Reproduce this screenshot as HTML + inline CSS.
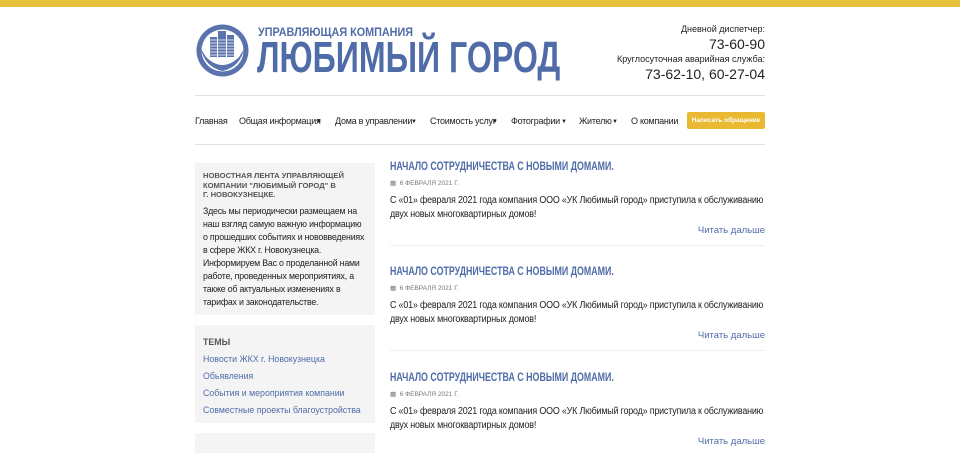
<!DOCTYPE html>
<html><head><meta charset="utf-8"><style>
*{margin:0;padding:0;box-sizing:border-box}
body{width:960px;height:448px;overflow:hidden;background:#fff;font-family:"Liberation Sans",sans-serif;color:#222;position:relative}
.top{position:absolute;left:0;top:0;width:960px;height:7px;background:#e9c23c}
.a{position:absolute;white-space:nowrap}
.blue{color:#4f6ca8}
.nav{font-size:9px;color:#222;top:116px;letter-spacing:-0.25px}
.nav b{font-weight:normal;font-size:6px;vertical-align:1px}
.box{position:absolute;left:195px;width:180px;background:#f4f4f4;white-space:nowrap}
.post .t{font-size:11.5px;font-weight:bold;color:#4f6ca8;transform:scaleX(.77);transform-origin:left top;white-space:nowrap}
.post .d{font-size:6.5px;color:#777}
.post .x{font-size:9.8px;line-height:14px;color:#222;letter-spacing:-0.2px;transform:scaleX(.91);transform-origin:left top;white-space:nowrap}
.post .r{font-size:9.5px;color:#4f6ca8}
</style></head><body>
<div class="top"></div>
<svg class="a" style="left:195px;top:23px" width="55" height="55" viewBox="0 0 55 55">
<circle cx="27.5" cy="27.5" r="26" fill="#5a73ad"/>
<circle cx="27.5" cy="27.5" r="21" fill="#fff"/>
<path d="M6 26 Q10 44 27.5 48 Q45 44 49 26 L44 34 Q36 42 27.5 42 Q19 42 11 34Z" fill="#5a73ad"/>
<g fill="#5a73ad"><rect x="15" y="14" width="7" height="20"/><rect x="23" y="8" width="8" height="26"/><rect x="32" y="12" width="7" height="22"/></g>
<g stroke="#fff" stroke-width="0.8"><path d="M15 17H39M15 20H39M15 23H39M15 26H39M15 29H39M15 32H39"/></g>
</svg>
<div class="a blue" style="left:258px;top:25px;font-size:12px;font-weight:bold;transform:scaleX(.9);transform-origin:left top">УПРАВЛЯЮЩАЯ КОМПАНИЯ</div>
<div class="a blue" style="left:257px;top:33px;font-size:44px;font-weight:bold;transform:scaleX(.73);transform-origin:left top">ЛЮБИМЫЙ ГОРОД</div>
<div class="a" style="right:195px;top:23px;font-size:9px;text-align:right;line-height:13px">Дневной диспетчер:<br><span style="font-size:14px;line-height:16px">73-60-90</span><br>Круглосуточная аварийная служба:<br><span style="font-size:14px;line-height:16px">73-62-10, 60-27-04</span></div>
<div class="a" style="left:195px;top:95px;width:570px;height:1px;background:#e2e2e2"></div>
<div class="a nav" style="left:195px">Главная</div>
<div class="a nav" style="left:239px">Общая информация</div><div class="a nav" style="left:316px"><b>▼</b></div>
<div class="a nav" style="left:335px">Дома в управлении</div><div class="a nav" style="left:411px"><b>▼</b></div>
<div class="a nav" style="left:430px">Стоимость услуг</div><div class="a nav" style="left:492px"><b>▼</b></div>
<div class="a nav" style="left:511px">Фотографии</div><div class="a nav" style="left:561px"><b>▼</b></div>
<div class="a nav" style="left:579px">Жителю</div><div class="a nav" style="left:612px"><b>▼</b></div>
<div class="a nav" style="left:631px">О компании</div>
<div class="a" style="left:687px;top:112px;width:78px;height:17px;background:#e9b931;border-radius:2px;color:#fff;font-size:6.5px;font-weight:bold;text-align:center;line-height:17px">Написать обращение</div>
<div class="a" style="left:195px;top:144px;width:570px;height:1px;background:#e2e2e2"></div>
<div class="box" style="top:163px;height:152px;padding:8px 8px">
<div style="font-size:7.6px;font-weight:bold;color:#555;line-height:9.5px">НОВОСТНАЯ ЛЕНТА УПРАВЛЯЮЩЕЙ<br>КОМПАНИИ "ЛЮБИМЫЙ ГОРОД" В<br>Г. НОВОКУЗНЕЦКЕ.</div>
<div style="font-size:8.8px;line-height:13px;margin-top:5px;color:#222;letter-spacing:-0.2px">Здесь мы периодически размещаем на<br>наш взгляд самую важную информацию<br>о прошедших событиях и нововведениях<br>в сфере ЖКХ г. Новокузнецка.<br>Информируем Вас о проделанной нами<br>работе, проведенных мероприятиях, а<br>также об актуальных изменениях в<br>тарифах и законодательстве.</div>
</div>
<div class="box" style="top:325px;height:98px;padding:9px 8px;font-size:8.8px;line-height:17px">
<div style="font-weight:bold;color:#555">ТЕМЫ</div>
<div class="blue">Новости ЖКХ г. Новокузнецка</div>
<div class="blue">Обьявления</div>
<div class="blue">События и мероприятия компании</div>
<div class="blue">Совместные проекты благоустройства</div>
</div>
<div class="box" style="top:433px;height:20px"></div>

<div class="a post" style="left:390px;top:161px;width:375px">
<div class="t">НАЧАЛО СОТРУДНИЧЕСТВА С НОВЫМИ ДОМАМИ.</div>
<div class="d" style="margin-top:6px">▦ &nbsp;6 ФЕВРАЛЯ 2021 Г.</div>
<div class="x" style="margin-top:7px">С «01» февраля 2021 года компания ООО «УК Любимый город» приступила к обслуживанию<br>двух новых многоквартирных домов!</div>
<div class="r" style="text-align:right;margin-top:3px">Читать дальше</div>
<div style="height:1px;background:#eee;margin-top:9px"></div>
</div>
<div class="a post" style="left:390px;top:266px;width:375px">
<div class="t">НАЧАЛО СОТРУДНИЧЕСТВА С НОВЫМИ ДОМАМИ.</div>
<div class="d" style="margin-top:6px">▦ &nbsp;6 ФЕВРАЛЯ 2021 Г.</div>
<div class="x" style="margin-top:7px">С «01» февраля 2021 года компания ООО «УК Любимый город» приступила к обслуживанию<br>двух новых многоквартирных домов!</div>
<div class="r" style="text-align:right;margin-top:3px">Читать дальше</div>
<div style="height:1px;background:#eee;margin-top:9px"></div>
</div>
<div class="a post" style="left:390px;top:372px;width:375px">
<div class="t">НАЧАЛО СОТРУДНИЧЕСТВА С НОВЫМИ ДОМАМИ.</div>
<div class="d" style="margin-top:6px">▦ &nbsp;6 ФЕВРАЛЯ 2021 Г.</div>
<div class="x" style="margin-top:7px">С «01» февраля 2021 года компания ООО «УК Любимый город» приступила к обслуживанию<br>двух новых многоквартирных домов!</div>
<div class="r" style="text-align:right;margin-top:3px">Читать дальше</div>
</div>
</body></html>
